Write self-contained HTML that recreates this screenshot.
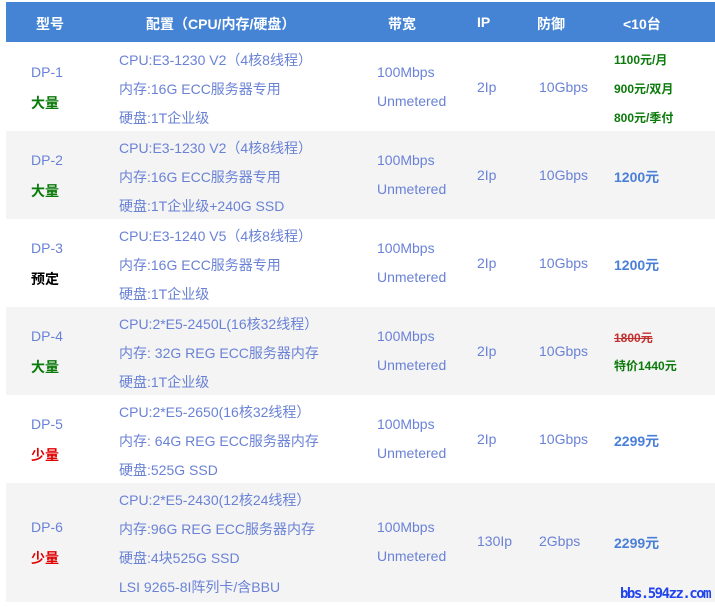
<!DOCTYPE html>
<html><head><meta charset="utf-8"><style>
body{margin:0;background:#fff;width:715px;height:607px;overflow:hidden;font-family:"Liberation Sans","Noto Sans CJK SC",sans-serif;}
.t{position:absolute;left:6px;top:2px;width:709px;}
.h{height:40px;background:#4584d4;color:#fff;font-weight:bold;font-size:14px;position:relative;}
.h span{position:absolute;top:12px;}
.r{position:relative;font-size:14px;color:#6a82d6;}
.r.g{background:#f4f4f4;}
.r div{position:absolute;}
.c1{left:25px;}.c2{left:113px;}.c3{left:371px;}.c4{left:471px;}.c5{left:533px;}.c6{left:608px;}
.gr{color:#0a7a0a;font-weight:bold;}
.rd{color:#e00000;font-weight:bold;}
.bk{color:#000;font-weight:bold;}
.pr{font-weight:bold;color:#4a7fd8;}
.sm{font-size:12px;font-weight:bold;color:#0a7a0a;}
.wm{position:absolute;left:620px;top:586px;font-family:"DejaVu Sans Mono","Liberation Mono",monospace;font-weight:bold;color:#2244ee;font-size:14px;letter-spacing:-1.5px;white-space:nowrap;}
</style></head><body>
<div class="t">
<div class="h"><span style="left:30px">型号</span><span style="left:140px">配置（CPU/内存/硬盘）</span><span style="left:382px">带宽</span><span style="left:471px">IP</span><span style="left:531px">防御</span><span style="left:617px">&lt;10台</span></div>

<div class="r" style="height:89px">
<div class="c1" style="top:22px">DP-1</div><div class="c1 gr" style="top:51px">大量</div>
<div class="c2" style="top:8px">CPU:E3-1230 V2（4核8线程）</div><div class="c2" style="top:37px">内存:16G ECC服务器专用</div><div class="c2" style="top:66px">硬盘:1T企业级</div>
<div class="c3" style="top:22px">100Mbps</div><div class="c3" style="top:51px">Unmetered</div>
<div class="c4" style="top:37px">2Ip</div><div class="c5" style="top:37px">10Gbps</div>
<div class="c6 sm" style="top:9px">1100元/月</div><div class="c6 sm" style="top:38px">900元/双月</div><div class="c6 sm" style="top:67px">800元/季付</div>
</div>

<div class="r g" style="height:88px">
<div class="c1" style="top:21px">DP-2</div><div class="c1 gr" style="top:50px">大量</div>
<div class="c2" style="top:7px">CPU:E3-1230 V2（4核8线程）</div><div class="c2" style="top:36px">内存:16G ECC服务器专用</div><div class="c2" style="top:65px">硬盘:1T企业级+240G SSD</div>
<div class="c3" style="top:21px">100Mbps</div><div class="c3" style="top:50px">Unmetered</div>
<div class="c4" style="top:36px">2Ip</div><div class="c5" style="top:36px">10Gbps</div>
<div class="c6 pr" style="top:36px">1200元</div>
</div>

<div class="r" style="height:88px">
<div class="c1" style="top:21px">DP-3</div><div class="c1 bk" style="top:50px">预定</div>
<div class="c2" style="top:7px">CPU:E3-1240 V5（4核8线程）</div><div class="c2" style="top:36px">内存:16G ECC服务器专用</div><div class="c2" style="top:65px">硬盘:1T企业级</div>
<div class="c3" style="top:21px">100Mbps</div><div class="c3" style="top:50px">Unmetered</div>
<div class="c4" style="top:36px">2Ip</div><div class="c5" style="top:36px">10Gbps</div>
<div class="c6 pr" style="top:36px">1200元</div>
</div>

<div class="r g" style="height:88px">
<div class="c1" style="top:21px">DP-4</div><div class="c1 gr" style="top:50px">大量</div>
<div class="c2" style="top:7px">CPU:2*E5-2450L(16核32线程）</div><div class="c2" style="top:36px">内存: 32G REG ECC服务器内存</div><div class="c2" style="top:65px">硬盘:1T企业级</div>
<div class="c3" style="top:21px">100Mbps</div><div class="c3" style="top:50px">Unmetered</div>
<div class="c4" style="top:36px">2Ip</div><div class="c5" style="top:36px">10Gbps</div>
<div class="c6 sm" style="top:22px;text-decoration:line-through;color:#c23030">1800元</div><div class="c6 sm" style="top:50px">特价1440元</div>
</div>

<div class="r" style="height:88px">
<div class="c1" style="top:21px">DP-5</div><div class="c1 rd" style="top:50px">少量</div>
<div class="c2" style="top:7px">CPU:2*E5-2650(16核32线程）</div><div class="c2" style="top:36px">内存: 64G REG ECC服务器内存</div><div class="c2" style="top:65px">硬盘:525G SSD</div>
<div class="c3" style="top:21px">100Mbps</div><div class="c3" style="top:50px">Unmetered</div>
<div class="c4" style="top:36px">2Ip</div><div class="c5" style="top:36px">10Gbps</div>
<div class="c6 pr" style="top:36px">2299元</div>
</div>

<div class="r g" style="height:119px">
<div class="c1" style="top:36px">DP-6</div><div class="c1 rd" style="top:65px">少量</div>
<div class="c2" style="top:7px">CPU:2*E5-2430(12核24线程）</div><div class="c2" style="top:36px">内存:96G REG ECC服务器内存</div><div class="c2" style="top:65px">硬盘:4块525G SSD</div><div class="c2" style="top:94px">LSI 9265-8I阵列卡/含BBU</div>
<div class="c3" style="top:36px">100Mbps</div><div class="c3" style="top:65px">Unmetered</div>
<div class="c4" style="top:50px">130Ip</div><div class="c5" style="top:50px">2Gbps</div>
<div class="c6 pr" style="top:50px">2299元</div>
</div>
</div>
<div class="wm">bbs.594zz.com</div>
</body></html>
